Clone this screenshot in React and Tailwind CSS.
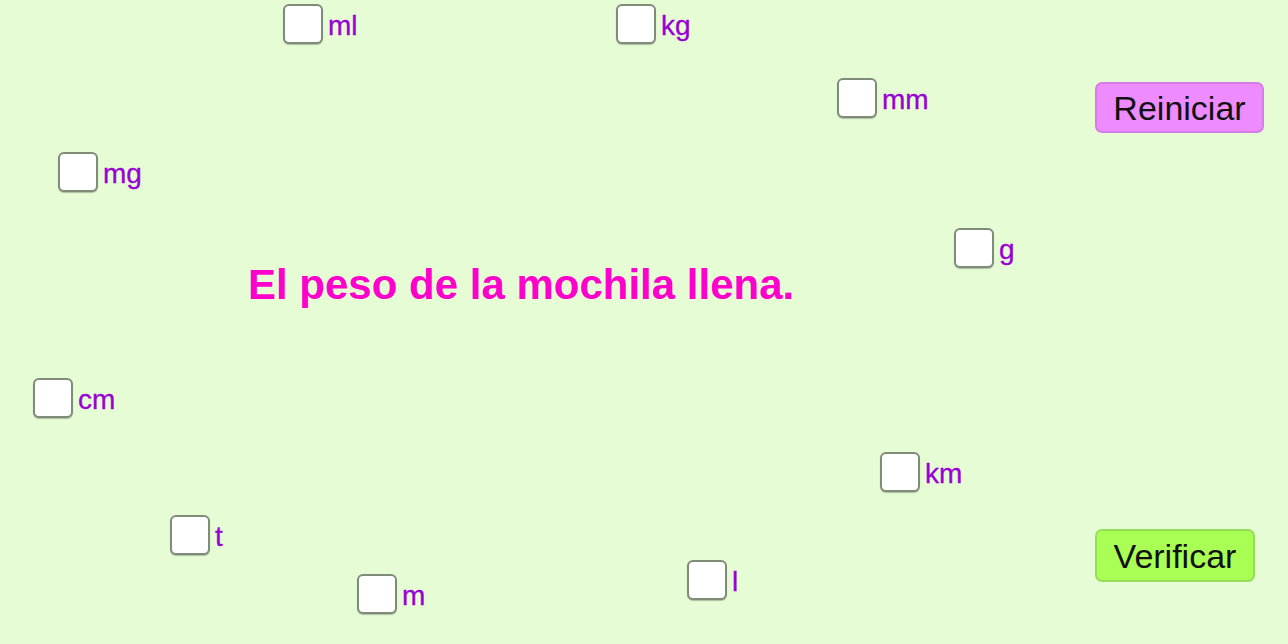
import { useState } from "react";

const units = [
  { id: "ml", x: 283, y: 4 },
  { id: "kg", x: 616, y: 4 },
  { id: "mm", x: 837, y: 78 },
  { id: "mg", x: 58, y: 152 },
  { id: "g", x: 954, y: 228 },
  { id: "cm", x: 33, y: 378 },
  { id: "km", x: 880, y: 452 },
  { id: "t", x: 170, y: 515 },
  { id: "m", x: 357, y: 574 },
  { id: "l", x: 687, y: 560 },
];

function UnitCheck({ unit, checked, onToggle }) {
  return (
    <label
      className="absolute flex items-center cursor-pointer select-none"
      style={{ left: unit.x, top: unit.y }}
    >
      <span
        onClick={onToggle}
        className="w-[40px] h-[40px] rounded-[6px] border-2 border-[#7f8c79] bg-white shadow-[0_1px_1px_rgba(0,0,0,0.25)] flex items-center justify-center text-[26px] leading-none text-black"
      >
        {checked ? "✓" : ""}
      </span>
      <span className="ml-[5px] mt-1 text-[28px] leading-none text-[#9900d4] [-webkit-text-stroke:0.3px_#9900d4]">{unit.id}</span>
    </label>
  );
}

export default function App() {
  const [checked, setChecked] = useState({});

  const toggle = (id) => setChecked((prev) => ({ ...prev, [id]: !prev[id] }));

  return (
    <div
      className="relative w-full h-[644px] overflow-hidden bg-[#e6fcd5]"
      style={{ fontFamily: '"Liberation Sans", Arial, sans-serif' }}
    >
      {units.map((u) => (
        <UnitCheck key={u.id} unit={u} checked={!!checked[u.id]} onToggle={() => toggle(u.id)} />
      ))}

      <div className="absolute left-[248px] top-[264px] text-[42px] leading-none font-bold text-[#ff00cc] whitespace-nowrap">
        El peso de la mochila llena.
      </div>

      <button
        onClick={() => setChecked({})}
        className="absolute left-[1095px] top-[82px] w-[169px] h-[51px] rounded-[7px] border-2 border-[#d67ce6] bg-[#ee8cff] text-[34px] leading-none text-[#111]"
      >
        Reiniciar
      </button>

      <button className="absolute left-[1095px] top-[529px] w-[160px] h-[53px] rounded-[7px] border-2 border-[#96de58] bg-[#aaff55] text-[34px] leading-none text-[#111]">
        Verificar
      </button>
    </div>
  );
}
